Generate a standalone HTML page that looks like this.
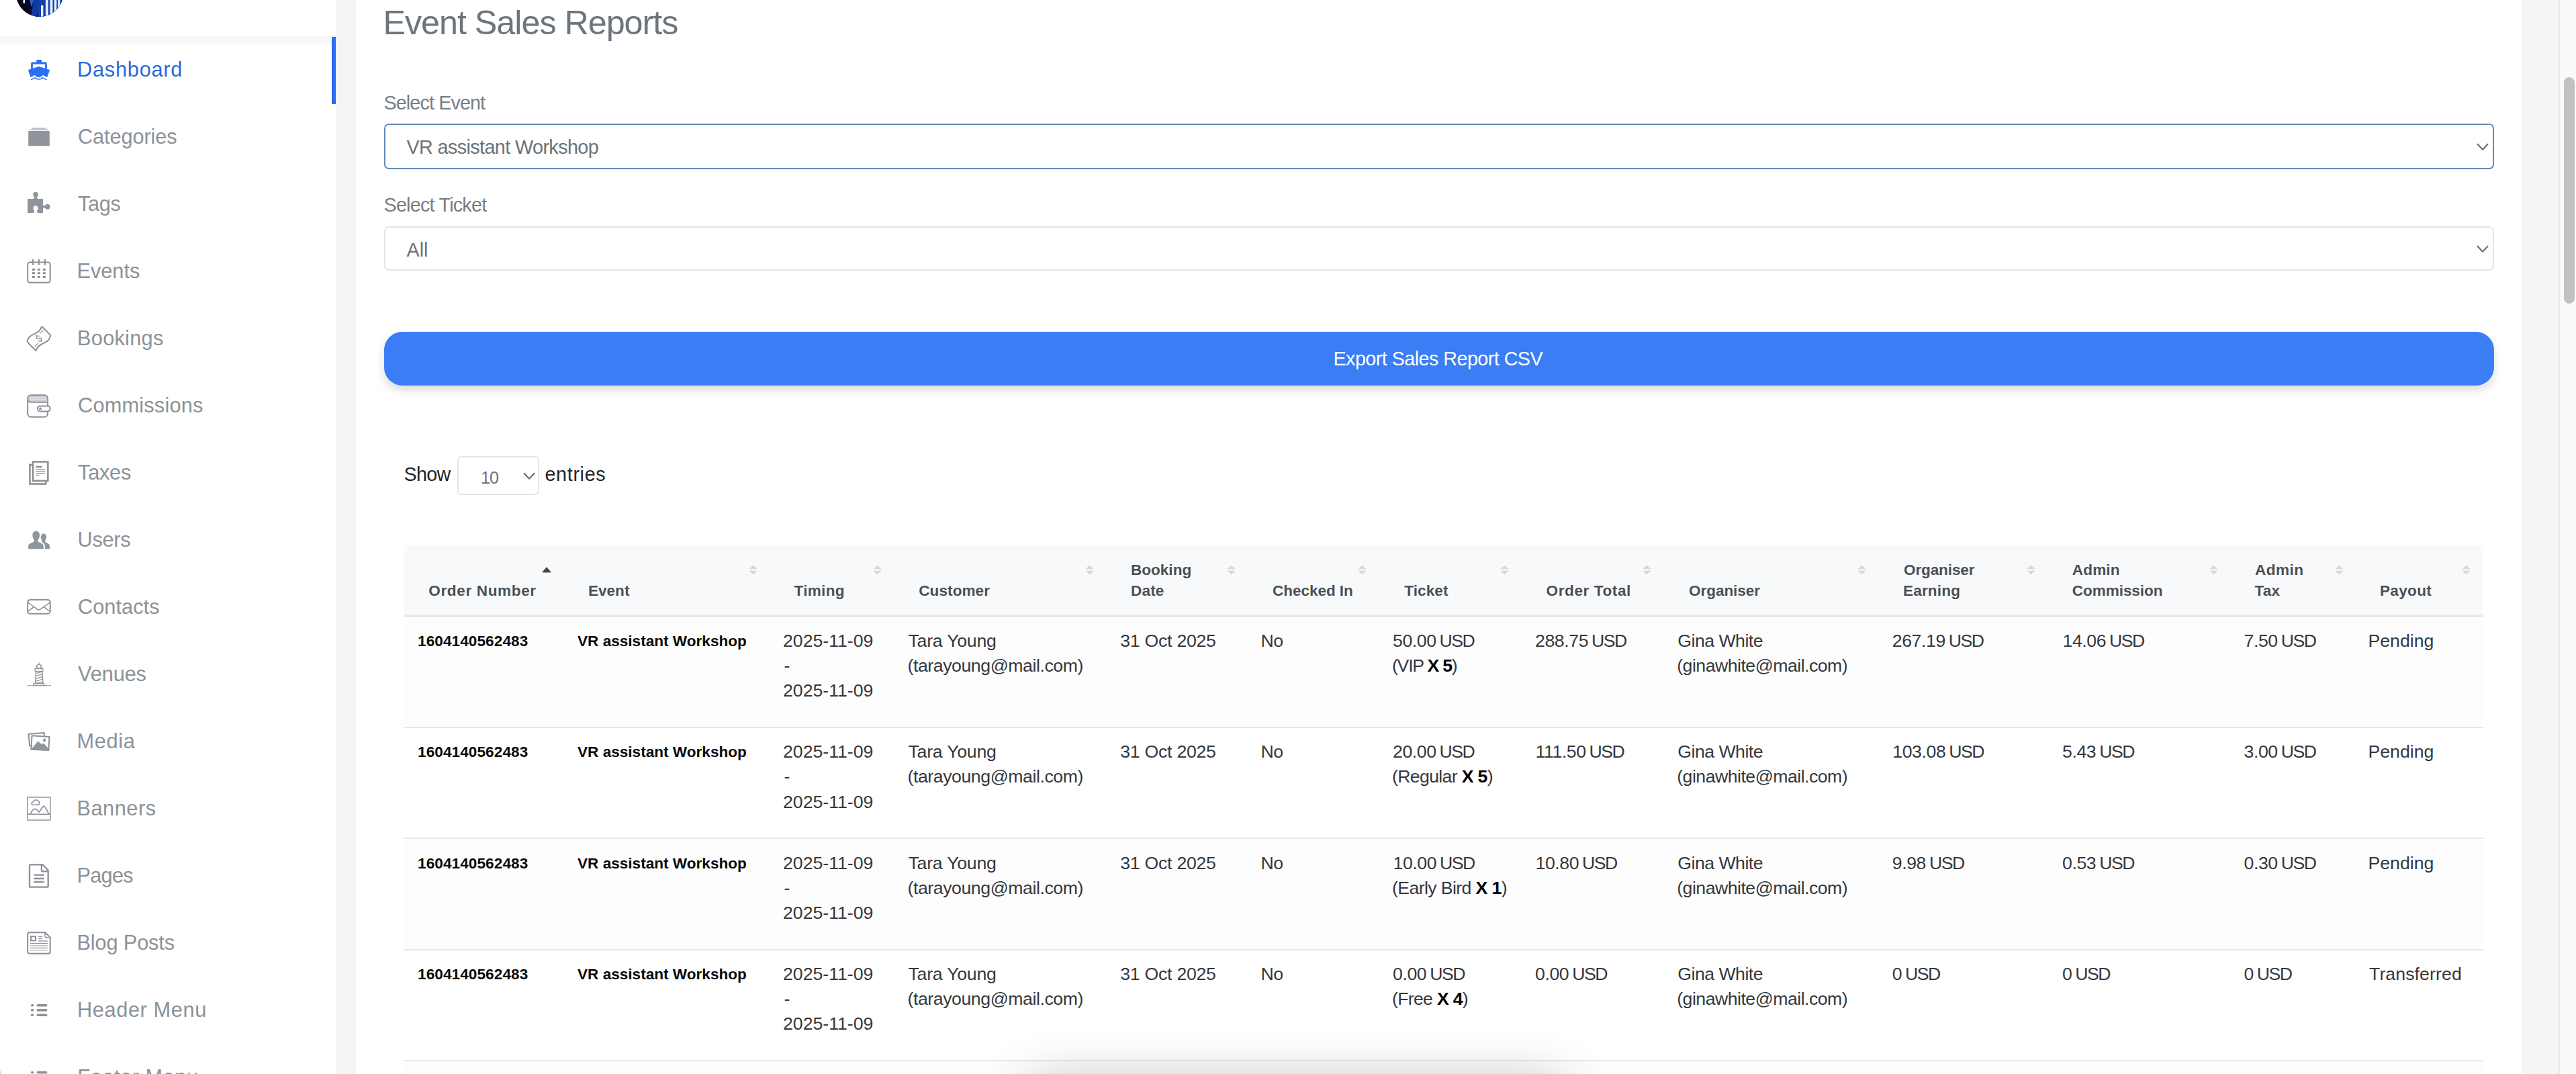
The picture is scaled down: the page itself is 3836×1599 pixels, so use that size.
<!DOCTYPE html>
<html lang="en"><head><meta charset="utf-8"><title>Event Sales Reports</title>
<style>
*{box-sizing:border-box;margin:0;padding:0}
html,body{width:3836px;height:1599px;overflow:hidden;background:#f5f5f5}
body{font-family:"Liberation Sans",Arial,sans-serif;position:relative;color:#212529}
.abs{position:absolute}
.t{position:absolute;white-space:nowrap;display:block}
#side{position:absolute;left:0;top:0;width:500px;height:1599px;background:#fff;overflow:hidden}
#shead{position:absolute;left:0;top:0;width:500px;height:54px;background:#fff;z-index:3}
#shsh{position:absolute;left:0;top:54px;width:494px;height:14px;background:linear-gradient(#f6f6f6,#f9f9f9 65%,#fff);z-index:2}
#avatar{position:absolute;left:24px;top:-45px;width:70px;height:70px;border-radius:50%;overflow:hidden;background:#070a22;z-index:4}
.nav{position:absolute;left:0;width:500px;height:100px}
.nav .ic{position:absolute;left:30px;top:20px}
.nav.act:after{content:"";position:absolute;right:0;top:0;width:6.5px;height:100px;background:#2c6bf3}
#card{position:absolute;left:530px;top:-40px;width:3225.3px;height:1700px;background:#fff}
.sel{position:absolute;left:572px;width:3142px;border-radius:7px;background:#fff}
.chev{position:absolute}
#btn{position:absolute;left:572px;top:494px;width:3142px;height:80px;border-radius:27px;background:#3b7df5;box-shadow:0 7px 14px rgba(20,20,40,.15)}
#thead{position:absolute;left:601.25px;top:812px;width:3096.5px;height:103px;background:#f8f9fa}
#thb{position:absolute;left:601.25px;top:915px;width:3096.5px;height:3.75px;background:#e7e9ec}
.row{position:absolute;left:601.25px;width:3096.5px}
.row.odd{background:#fdfdfd}
.sep{position:absolute;left:601.25px;width:3096.5px;height:2px;background:#e6e7e8}

#root{position:absolute;left:0;top:0;width:3836px;height:1599px;overflow:hidden;background:#f5f5f5}
</style></head><body><div id="root">

<div id="side">
<div id="shead"></div><div id="shsh"></div>
<div id="avatar"><svg width="70" height="70" viewBox="0 0 70 70">
<rect width="70" height="70" fill="#05081f"/>
<path d="M22 70 L26 45 L33 45 L37 70 Z" fill="#123a9e"/>
<path d="M30 70 L37 48 L37 70 Z" fill="#0a1c66"/>
<rect x="33" y="45" width="40" height="25" fill="#1440ad"/>
<path d="M20 45 L26 45 L23 56 Z" fill="#2a5fd8"/>
<rect x="10.5" y="45" width="2.5" height="5" fill="#e6f2ff"/>
<rect x="37" y="53" width="3.4" height="17" fill="#e3f1ff"/>
<rect x="43.9" y="45" width="3.9" height="25" fill="#e3f1ff"/>
<rect x="50.5" y="45" width="3.9" height="25" fill="#e3f1ff"/>
<rect x="56.7" y="45" width="3.6" height="25" fill="#e3f1ff"/>
<rect x="62.2" y="45" width="3.1" height="25" fill="#e3f1ff"/>
</svg></div><div class="abs" style="left:141px;top:-1px;width:6px;height:1.3px;border-radius:1px;background:#b5b8bb;z-index:4"></div>
<div class="nav act" style="top:55px"><svg class="ic" viewBox="30 20 60 60" width="60" height="60" >
<g fill="#2d6ef5">
<rect x="54.2" y="34" width="7.8" height="4.6" rx="1"/>
<path fill-rule="evenodd" d="M48.3 37.5 H67.7 A2.2 2.2 0 0 1 69.9 39.7 V48.5 H67.1 V40.6 H48.9 V48.5 H46.1 V39.7 A2.2 2.2 0 0 1 48.3 37.5 Z"/>
<path d="M57.8 43.9 L73.2 48.7 Q74.1 49 73.8 50 L70.4 59.6 Q67.6 59.9 65.6 57.6 Q64.4 56.4 63.4 57.6 Q61 60.2 57.8 60.2 Q54.6 60.2 52.2 57.6 Q51.2 56.4 50 57.6 Q48 59.9 45.2 59.6 L42.2 50 Q41.9 49 42.8 48.7 Z"/>
</g>
<path d="M46.6 63.6 Q49.6 62.8 51.9 60.6 Q54.6 63 57.8 63 Q61 63 63.7 60.6 Q66 62.8 69 63.6" fill="none" stroke="#2d6ef5" stroke-width="1.45" stroke-linecap="round" stroke-linejoin="round"/>
</svg></div>
<span id="t0" class="t" style="left:115.00px;top:83.00px;font-size:30.75px;line-height:41px;color:#2b68d9;letter-spacing:0.750px;">Dashboard</span>
<div class="nav" style="top:155px"><svg class="ic" viewBox="30 20 60 60" width="60" height="60" >
<rect x="42.2" y="40" width="31.6" height="22.3" fill="#8e959d"/>
<rect x="45" y="37.7" width="26" height="1.3" fill="#8e959d"/>
<rect x="47.5" y="35.2" width="21" height="1.7" fill="#b9bdc2"/>
</svg></div>
<span id="t1" class="t" style="left:116.00px;top:183.00px;font-size:30.75px;line-height:41px;color:#8b9298;letter-spacing:-0.111px;">Categories</span>
<div class="nav" style="top:255px"><svg class="ic" viewBox="30 20 60 60" width="60" height="60" >
<path fill="#8e959d" d="M41.1 41.1 H49.8 Q51.5 40.6 51.2 38.2 A4 4 0 1 1 55 38.2 Q54.7 40.6 56.4 41.1 H64 V49.8 Q64.5 51.5 67.2 50.9 A4 4 0 1 1 67.2 54.7 Q64.5 54.1 64 55.8 V62.1 H56.2 Q54.8 60.6 55.2 58.2 A3.75 3.75 0 1 0 51 58.2 Q51.4 60.6 50 62.1 H41.1 Z"/>
</svg></div>
<span id="t2" class="t" style="left:116.00px;top:283.00px;font-size:30.75px;line-height:41px;color:#8b9298;letter-spacing:-0.333px;">Tags</span>
<div class="nav" style="top:355px"><svg class="ic" viewBox="30 20 60 60" width="60" height="60" ><rect x="41.2" y="35.4" width="33.5" height="30.4" rx="3.5" fill="none" stroke="#8b9096" stroke-width="2"/><line x1="48.9" y1="31.1" x2="48.9" y2="39.7" stroke="#8b9096" stroke-width="2"/><line x1="58" y1="31.1" x2="58" y2="39.7" stroke="#8b9096" stroke-width="2"/><line x1="67" y1="31.1" x2="67" y2="39.7" stroke="#8b9096" stroke-width="2"/><rect x="48" y="44.8" width="4" height="3" fill="#8b9096"/><rect x="48" y="50.2" width="4" height="3" fill="#8b9096"/><rect x="48" y="55.9" width="4" height="3" fill="#8b9096"/><rect x="55.9" y="44.8" width="4" height="3" fill="#8b9096"/><rect x="55.9" y="50.2" width="4" height="3" fill="#8b9096"/><rect x="55.9" y="55.9" width="4" height="3" fill="#8b9096"/><rect x="63.8" y="44.8" width="4" height="3" fill="#8b9096"/><rect x="63.8" y="50.2" width="4" height="3" fill="#8b9096"/><rect x="63.8" y="55.9" width="4" height="3" fill="#8b9096"/></svg></div>
<span id="t3" class="t" style="left:114.50px;top:383.00px;font-size:30.75px;line-height:41px;color:#8b9298;letter-spacing:-0.040px;">Events</span>
<div class="nav" style="top:455px"><svg class="ic" viewBox="30 20 60 60" width="60" height="60" >
<g fill="none" stroke="#8b9096" stroke-width="2" stroke-linejoin="round" stroke-linecap="round">
<path d="M40.6 53.2 C41.5 47 46 44.5 51.1 42.2 C56 40 60.5 37.5 61.6 32 Q62.3 30.9 63.2 31.8 L74.8 43.6 Q75.6 44.6 75.1 45.6 C73.5 52 69 54 65.1 55.8 C60 58.2 55.5 60.5 54.3 65.8 Q53.6 67.2 52.5 66.2 L41 54.3 Q40.4 53.8 40.6 53.2 Z"/>
</g>
<g fill="none" stroke="#8b9096" stroke-width="1.2" stroke-linecap="round">
<path d="M59.5 41.1 L64 37.2 M52.3 60.7 L56.7 56.2"/>
<g transform="translate(57.9 48.9) rotate(-41)" stroke-width="1.5"><path d="M2.5 -2.5 C2.1 -3.8 0.9 -4.3 -0.2 -4.3 C-1.7 -4.3 -2.7 -3.4 -2.6 -2.2 C-2.5 -0.9 -1.3 -0.5 0 0 C1.5 0.5 2.7 1 2.7 2.3 C2.7 3.6 1.6 4.3 0.2 4.3 C-1.2 4.3 -2.3 3.8 -2.8 2.6 M0 -5.7 V-4.3 M0 4.3 V5.7"/></g>
</g>
</svg></div>
<span id="t4" class="t" style="left:115.00px;top:483.00px;font-size:30.75px;line-height:41px;color:#8b9298;letter-spacing:0.257px;">Bookings</span>
<div class="nav" style="top:555px"><svg class="ic" viewBox="30 20 60 60" width="60" height="60" >
<rect x="42.4" y="34.6" width="27.4" height="9" rx="3" fill="#c3c6cb"/>
<path d="M44 37.3 H68.5 M44 40.4 H68.5" stroke="#fff" stroke-width="1.2"/>
<rect x="41.2" y="33.2" width="29.9" height="32.6" rx="5" fill="none" stroke="#8b9096" stroke-width="2"/>
<path d="M41.5 40 Q42 43.9 46 43.9 H71" fill="none" stroke="#8b9096" stroke-width="1.8"/>
<rect x="56" y="49.4" width="18.7" height="8" rx="4" ry="4" fill="#fff" stroke="#8b9096" stroke-width="2"/>
<circle cx="60" cy="53.4" r="1.9" fill="#8b9096"/>
</svg></div>
<span id="t5" class="t" style="left:116.00px;top:583.00px;font-size:30.75px;line-height:41px;color:#8b9298;letter-spacing:0.180px;">Commissions</span>
<div class="nav" style="top:655px"><svg class="ic" viewBox="30 20 60 60" width="60" height="60" >
<path d="M44.45 35.8 V65.45 H68.2 V61" fill="none" stroke="#8b9096" stroke-width="2.5"/>
<path d="M43.2 37 H48" stroke="#8b9096" stroke-width="2.5"/>
<rect x="49.05" y="32.55" width="22.3" height="28.3" fill="#fff" stroke="#8b9096" stroke-width="2.5"/>
<path d="M53.4 40 H62.6" stroke="#8b9096" stroke-width="2.6"/>
<path d="M53.4 43.8 H67 M53.4 46.8 H67 M53.4 49.8 H67 M53.4 52.7 H57.8" stroke="#8b9096" stroke-width="1.3"/>
</svg></div>
<span id="t6" class="t" style="left:116.00px;top:683.00px;font-size:30.75px;line-height:41px;color:#8b9298;letter-spacing:-0.250px;">Taxes</span>
<div class="nav" style="top:755px"><svg class="ic" viewBox="30 20 60 60" width="60" height="60" >
<g fill="#8e959d">
<path d="M65 39.4 C67.6 39.4 69.1 41.4 69 44.3 C68.9 47 68 48.6 67.3 49.8 C67 51.6 67.6 52.4 69.2 53.1 C72.5 54.3 74 55.6 74 58 V62.3 H67 V58.5 C67 55.8 65.6 54.6 63.2 53.4 L61.2 52.5 C62.4 51.6 62.6 50.8 62.4 49.8 C61.6 48.6 61 46.6 61 44.3 C61 41.4 62.4 39.4 65 39.4 Z"/>
<path d="M53.8 35.8 C57.2 35.8 59.2 38.2 59.1 41.8 C59 45 57.8 47.4 56.6 48.8 C56.2 50.6 56.8 51.6 58.6 52.4 C62.6 54 64.8 55.2 64.8 58.4 V62.3 H42.2 V58.4 C42.2 55.2 44.6 54 48.8 52.4 C50.6 51.6 51.2 50.6 50.8 48.8 C49.6 47.4 48.5 45 48.4 41.8 C48.3 38.2 50.4 35.8 53.8 35.8 Z" stroke="#fff" stroke-width="0" />
</g>
<path d="M59.6 51.4 C63.6 53 66 54.6 66 58.4 V63" fill="none" stroke="#fff" stroke-width="1.6"/>
</svg></div>
<span id="t7" class="t" style="left:115.50px;top:783.00px;font-size:30.75px;line-height:41px;color:#8b9298;letter-spacing:-0.300px;">Users</span>
<div class="nav" style="top:855px"><svg class="ic" viewBox="30 20 60 60" width="60" height="60" >
<rect x="41.2" y="37.9" width="33.5" height="20.9" rx="4" fill="none" stroke="#8b9096" stroke-width="2"/>
<path d="M41.6 42 L56.4 52.6 Q57.8 53.6 59.2 52.6 L74.2 42 M41.9 54.8 L50.6 48.7 M74 54.8 L65.1 48.7" fill="none" stroke="#8b9096" stroke-width="1.5"/>
</svg></div>
<span id="t8" class="t" style="left:116.00px;top:883.00px;font-size:30.75px;line-height:41px;color:#8b9298;letter-spacing:0.029px;">Contacts</span>
<div class="nav" style="top:955px"><svg class="ic" viewBox="30 20 60 60" width="60" height="60" ><g fill="none" stroke="#8b9096" stroke-width="1.15" stroke-linejoin="round"><path d="M53.4 44.5 L52.3 62.3 H64 L62.9 44.5"/><rect x="52.1" y="40.6" width="11.9" height="3.9"/><path d="M54.2 40.6 V38 Q54.2 34.2 58.1 34.2 Q61.8 34.2 61.8 38 V40.6 M56.2 40.6 V36 M60 40.6 V36 M58.1 34.2 V31.3"/><rect x="50.1" y="62.3" width="15.7" height="3.1"/><path d="M53.3 47.6 L62.9 44.9 M53 51.6 L63.2 48.6 M52.8 55.6 L63.4 52.4 M52.6 59.4 L63.7 56.2 M55 62.3 L63.9 59.8"/><path d="M40 65.7 q1.5 1.2 3 0 t3 0 t3 0 t3 0 t3 0 t3 0 t3 0 t3 0 t3 0 t3 0 t3 0 t3 0" stroke-width="1"/></g></svg></div>
<span id="t9" class="t" style="left:116.00px;top:983.00px;font-size:30.75px;line-height:41px;color:#8b9298;letter-spacing:-0.120px;">Venues</span>
<div class="nav" style="top:1055px"><svg class="ic" viewBox="30 20 60 60" width="60" height="60" >
<path d="M46.5 55.4 L44.2 55.6 L42.5 37.8 L65.7 36.1 L66 40.6" fill="none" stroke="#8b9096" stroke-width="2" stroke-linejoin="round"/>
<path d="M47.5 40.3 L73.5 41.9 L72.4 62.1 L46.4 60.7 Z" fill="#fff" stroke="#8b9096" stroke-width="2" stroke-linejoin="round"/>
<path d="M46.6 60.6 L56.4 48.4 L62.6 53.4 L64.5 51.2 L72.6 59.8 L72.4 62.1 Z" fill="#8e959d"/>
<circle cx="66.2" cy="47" r="2.3" fill="#8e959d"/>
</svg></div>
<span id="t10" class="t" style="left:114.50px;top:1083.00px;font-size:30.75px;line-height:41px;color:#8b9298;letter-spacing:0.650px;">Media</span>
<div class="nav" style="top:1155px"><svg class="ic" viewBox="30 20 60 60" width="60" height="60" >
<rect x="41" y="31.9" width="33.9" height="34.1" fill="none" stroke="#8b9096" stroke-width="1.45"/>
<path d="M41 57.3 H75" stroke="#8b9096" stroke-width="1.45"/>
<path d="M45.3 57 C47.5 51.5 50 49.3 52 49.4 C54.5 49.5 56.5 52 58.4 54.2 C61 50.5 63 45.3 65.1 45.3 C67.2 45.3 69.5 51 72.9 57" fill="none" stroke="#8b9096" stroke-width="1.7" stroke-linejoin="round"/>
<path d="M49.6 43.3 C46.4 43.3 46.4 39.2 49.4 38.9 C50 35.6 55 35 56.6 37.6 C59.4 38 59.6 43.3 56 43.3 Z" fill="none" stroke="#8b9096" stroke-width="1.5" stroke-linejoin="round"/>
</svg></div>
<span id="t11" class="t" style="left:114.50px;top:1183.00px;font-size:30.75px;line-height:41px;color:#8b9298;letter-spacing:0.500px;">Banners</span>
<div class="nav" style="top:1255px"><svg class="ic" viewBox="30 20 60 60" width="60" height="60" >
<path d="M45.5 32.3 H63.6 L71.7 40.6 V64.2 Q71.7 65.7 70.2 65.7 H45.5 Q44 65.7 44 64.2 V33.8 Q44 32.3 45.5 32.3 Z" fill="none" stroke="#8b9096" stroke-width="2.3" stroke-linejoin="round"/>
<path d="M61.9 32.6 V41.2 Q61.9 42.4 63.1 42.4 H71.6" fill="none" stroke="#8b9096" stroke-width="2.3"/>
<path d="M50.3 47.7 H65.7 M50.3 53 H65.7 M50.3 58 H65.7" stroke="#8b9096" stroke-width="2.3"/>
</svg></div>
<span id="t12" class="t" style="left:114.50px;top:1283.00px;font-size:30.75px;line-height:41px;color:#8b9298;letter-spacing:-0.750px;">Pages</span>
<div class="nav" style="top:1355px"><svg class="ic" viewBox="30 20 60 60" width="60" height="60" >
<path d="M44.2 33.2 H67.4 L74.7 40.6 V61.7 Q74.7 64.7 71.7 64.7 H44.2 Q41.2 64.7 41.2 61.7 V36.2 Q41.2 33.2 44.2 33.2 Z" fill="none" stroke="#8b9096" stroke-width="2" stroke-linejoin="round"/>
<path d="M66.8 33.6 L67 38.6 Q67.1 41 69.4 41 L74.4 41.1" fill="none" stroke="#8b9096" stroke-width="1.4"/>
<rect x="46" y="39.3" width="7" height="6.1" fill="none" stroke="#8b9096" stroke-width="2"/>
<path d="M57.3 39.4 H63 M57.3 42.6 H63" stroke="#8b9096" stroke-width="1.3"/>
<path d="M57.3 46 H71" stroke="#a9adb2" stroke-width="1.7"/>
<path d="M45 49.5 H71 M45 53 H71 M45 56.4 H71 M45 59.5 H71" stroke="#8b9096" stroke-width="1.2"/>
</svg></div>
<span id="t13" class="t" style="left:114.50px;top:1383.00px;font-size:30.75px;line-height:41px;color:#8b9298;letter-spacing:-0.156px;">Blog Posts</span>
<div class="nav" style="top:1455px"><svg class="ic" viewBox="30 20 60 60" width="60" height="60" ><ellipse cx="48.1" cy="41.7" rx="2.4" ry="1.8" fill="#8b9096"/><rect x="54.5" y="39.900000000000006" width="15.9" height="3.6" rx="1.8" fill="#8b9096"/><ellipse cx="48.1" cy="48.9" rx="2.4" ry="1.8" fill="#8b9096"/><rect x="54.5" y="47.1" width="15.9" height="3.6" rx="1.8" fill="#8b9096"/><ellipse cx="48.1" cy="56.2" rx="2.4" ry="1.8" fill="#8b9096"/><rect x="54.5" y="54.400000000000006" width="15.9" height="3.6" rx="1.8" fill="#8b9096"/></svg></div>
<span id="t14" class="t" style="left:115.00px;top:1483.00px;font-size:30.75px;line-height:41px;color:#8b9298;letter-spacing:0.600px;">Header Menu</span>
<div class="nav" style="top:1555px"><svg class="ic" viewBox="30 20 60 60" width="60" height="60" ><ellipse cx="48.1" cy="41.7" rx="2.4" ry="1.8" fill="#8b9096"/><rect x="54.5" y="39.900000000000006" width="15.9" height="3.6" rx="1.8" fill="#8b9096"/><ellipse cx="48.1" cy="48.9" rx="2.4" ry="1.8" fill="#8b9096"/><rect x="54.5" y="47.1" width="15.9" height="3.6" rx="1.8" fill="#8b9096"/><ellipse cx="48.1" cy="56.2" rx="2.4" ry="1.8" fill="#8b9096"/><rect x="54.5" y="54.400000000000006" width="15.9" height="3.6" rx="1.8" fill="#8b9096"/></svg></div>
<span id="t15" class="t" style="left:115.50px;top:1583.00px;font-size:30.75px;line-height:41px;color:#8b9298;letter-spacing:0.500px;">Footer Menu</span>
</div>
<div id="card"></div>
<span id="t16" class="t" style="left:570.50px;top:1.00px;font-size:50.22px;line-height:66px;color:#6c757d;letter-spacing:-1.000px;">Event Sales Reports</span>
<span id="t17" class="t" style="left:571.50px;top:134.00px;font-size:28.70px;line-height:38px;color:#777e85;letter-spacing:-0.864px;">Select Event</span>
<div class="sel" style="top:184px;height:67.5px;border:2.5px solid #648cb9"></div>
<span id="t18" class="t" style="left:605.50px;top:200.00px;font-size:28.70px;line-height:38px;color:#6b7278;letter-spacing:-0.575px;">VR assistant Workshop</span>
<span id="t19" class="t" style="left:571.50px;top:286.00px;font-size:28.70px;line-height:38px;color:#777e85;letter-spacing:-0.750px;">Select Ticket</span>
<div class="sel" style="top:337px;height:66px;border:2px solid #e4e5e7"></div>
<span id="t20" class="t" style="left:605.50px;top:353.00px;font-size:28.70px;line-height:38px;color:#6b7278;letter-spacing:0.000px;">All</span>
<svg class="chev" style="left:3687.7px;top:212.8px" width="18" height="11" viewBox="0 0 18 11"><path d="M1 1.2 L9 9.6 L17 1.2" fill="none" stroke="#666" stroke-width="2.1"/></svg>
<svg class="chev" style="left:3687.7px;top:364.8px" width="18" height="11" viewBox="0 0 18 11"><path d="M1 1.2 L9 9.6 L17 1.2" fill="none" stroke="#666" stroke-width="2.1"/></svg>
<div id="btn"></div>
<span id="t21" class="t" style="left:1985.50px;top:515.00px;font-size:28.70px;line-height:38px;color:#fff;letter-spacing:-0.527px;">Export Sales Report CSV</span>
<span id="t22" class="t" style="left:601.50px;top:687.00px;font-size:28.70px;line-height:38px;color:#212529;letter-spacing:-0.667px;">Show</span>
<div class="abs" style="left:681px;top:679px;width:122px;height:58px;border:2px solid #e4e5e7;border-radius:6px;background:#fff"></div>
<span id="t23" class="t" style="left:716.00px;top:694.00px;font-size:25.11px;line-height:34px;color:#6b7278;letter-spacing:-1.000px;">10</span>
<svg class="chev" style="left:778.5px;top:703.3px" width="18" height="11" viewBox="0 0 18 11"><path d="M1 1.2 L9 9.6 L17 1.2" fill="none" stroke="#666" stroke-width="2.1"/></svg>
<span id="t24" class="t" style="left:811.50px;top:687.00px;font-size:28.70px;line-height:38px;color:#212529;letter-spacing:0.667px;">entries</span>
<div id="thead"></div><div id="thb"></div>
<span id="t25" class="t" style="left:638.25px;top:865.00px;font-size:22.55px;line-height:29px;color:#495057;font-weight:bold;letter-spacing:0.636px;">Order Number</span>
<svg class="abs" style="left:806.9px;top:843.6px" width="14" height="9" viewBox="0 0 14 9"><path d="M7 0.6 L13.3 8 H0.7 Z" fill="#444" stroke="#444" stroke-width="0.8" stroke-linejoin="round"/></svg>
<span id="t26" class="t" style="left:876.00px;top:865.00px;font-size:22.55px;line-height:29px;color:#495057;font-weight:bold;letter-spacing:0.000px;">Event</span>
<svg class="abs" style="left:1114.7px;top:840.6px" width="13" height="15" viewBox="0 0 13 15"><path d="M6.5 0.4 L12.6 6.2 H0.4 Z M0.4 8.8 H12.6 L6.5 14.6 Z" fill="#d6d8da"/></svg>
<span id="t27" class="t" style="left:1182.50px;top:865.00px;font-size:22.55px;line-height:29px;color:#495057;font-weight:bold;letter-spacing:0.300px;">Timing</span>
<svg class="abs" style="left:1300.2px;top:840.6px" width="13" height="15" viewBox="0 0 13 15"><path d="M6.5 0.4 L12.6 6.2 H0.4 Z M0.4 8.8 H12.6 L6.5 14.6 Z" fill="#d6d8da"/></svg>
<span id="t28" class="t" style="left:1368.25px;top:865.00px;font-size:22.55px;line-height:29px;color:#495057;font-weight:bold;letter-spacing:0.071px;">Customer</span>
<svg class="abs" style="left:1616.45px;top:840.6px" width="13" height="15" viewBox="0 0 13 15"><path d="M6.5 0.4 L12.6 6.2 H0.4 Z M0.4 8.8 H12.6 L6.5 14.6 Z" fill="#d6d8da"/></svg>
<span id="t29" class="t" style="left:1684.00px;top:834.00px;font-size:22.55px;line-height:29px;color:#495057;font-weight:bold;letter-spacing:0.000px;">Booking</span>
<span id="t30" class="t" style="left:1684.00px;top:865.00px;font-size:22.55px;line-height:29px;color:#495057;font-weight:bold;letter-spacing:0.171px;">Date</span>
<svg class="abs" style="left:1826.7px;top:840.6px" width="13" height="15" viewBox="0 0 13 15"><path d="M6.5 0.4 L12.6 6.2 H0.4 Z M0.4 8.8 H12.6 L6.5 14.6 Z" fill="#d6d8da"/></svg>
<span id="t31" class="t" style="left:1895.00px;top:865.00px;font-size:22.55px;line-height:29px;color:#495057;font-weight:bold;letter-spacing:-0.056px;">Checked In</span>
<svg class="abs" style="left:2022.45px;top:840.6px" width="13" height="15" viewBox="0 0 13 15"><path d="M6.5 0.4 L12.6 6.2 H0.4 Z M0.4 8.8 H12.6 L6.5 14.6 Z" fill="#d6d8da"/></svg>
<span id="t32" class="t" style="left:2091.25px;top:865.00px;font-size:22.55px;line-height:29px;color:#495057;font-weight:bold;letter-spacing:0.100px;">Ticket</span>
<svg class="abs" style="left:2234.45px;top:840.6px" width="13" height="15" viewBox="0 0 13 15"><path d="M6.5 0.4 L12.6 6.2 H0.4 Z M0.4 8.8 H12.6 L6.5 14.6 Z" fill="#d6d8da"/></svg>
<span id="t33" class="t" style="left:2302.50px;top:865.00px;font-size:22.55px;line-height:29px;color:#495057;font-weight:bold;letter-spacing:0.600px;">Order Total</span>
<svg class="abs" style="left:2446.2px;top:840.6px" width="13" height="15" viewBox="0 0 13 15"><path d="M6.5 0.4 L12.6 6.2 H0.4 Z M0.4 8.8 H12.6 L6.5 14.6 Z" fill="#d6d8da"/></svg>
<span id="t34" class="t" style="left:2515.00px;top:865.00px;font-size:22.55px;line-height:29px;color:#495057;font-weight:bold;letter-spacing:-0.062px;">Organiser</span>
<svg class="abs" style="left:2766.2px;top:840.6px" width="13" height="15" viewBox="0 0 13 15"><path d="M6.5 0.4 L12.6 6.2 H0.4 Z M0.4 8.8 H12.6 L6.5 14.6 Z" fill="#d6d8da"/></svg>
<span id="t35" class="t" style="left:2835.00px;top:834.00px;font-size:22.55px;line-height:29px;color:#495057;font-weight:bold;letter-spacing:-0.125px;">Organiser</span>
<span id="t36" class="t" style="left:2834.00px;top:865.00px;font-size:22.55px;line-height:29px;color:#495057;font-weight:bold;letter-spacing:0.171px;">Earning</span>
<svg class="abs" style="left:3018.2px;top:840.6px" width="13" height="15" viewBox="0 0 13 15"><path d="M6.5 0.4 L12.6 6.2 H0.4 Z M0.4 8.8 H12.6 L6.5 14.6 Z" fill="#d6d8da"/></svg>
<span id="t37" class="t" style="left:3085.75px;top:834.00px;font-size:22.55px;line-height:29px;color:#495057;font-weight:bold;letter-spacing:0.171px;">Admin</span>
<span id="t38" class="t" style="left:3085.75px;top:865.00px;font-size:22.55px;line-height:29px;color:#495057;font-weight:bold;letter-spacing:-0.056px;">Commission</span>
<svg class="abs" style="left:3290.2px;top:840.6px" width="13" height="15" viewBox="0 0 13 15"><path d="M6.5 0.4 L12.6 6.2 H0.4 Z M0.4 8.8 H12.6 L6.5 14.6 Z" fill="#d6d8da"/></svg>
<span id="t39" class="t" style="left:3358.00px;top:834.00px;font-size:22.55px;line-height:29px;color:#495057;font-weight:bold;letter-spacing:0.500px;">Admin</span>
<span id="t40" class="t" style="left:3357.50px;top:865.00px;font-size:22.55px;line-height:29px;color:#495057;font-weight:bold;letter-spacing:0.171px;">Tax</span>
<svg class="abs" style="left:3476.7px;top:840.6px" width="13" height="15" viewBox="0 0 13 15"><path d="M6.5 0.4 L12.6 6.2 H0.4 Z M0.4 8.8 H12.6 L6.5 14.6 Z" fill="#d6d8da"/></svg>
<span id="t41" class="t" style="left:3544.00px;top:865.00px;font-size:22.55px;line-height:29px;color:#495057;font-weight:bold;letter-spacing:0.320px;">Payout</span>
<svg class="abs" style="left:3666.45px;top:840.6px" width="13" height="15" viewBox="0 0 13 15"><path d="M6.5 0.4 L12.6 6.2 H0.4 Z M0.4 8.8 H12.6 L6.5 14.6 Z" fill="#d6d8da"/></svg>
<div class="sep" style="top:1082px"></div>
<div class="sep" style="top:1247.4px"></div>
<div class="sep" style="top:1412.9px"></div>
<div class="sep" style="top:1578.3px"></div>
<div class="row odd" style="top:918.75px;height:161.25px"></div>
<span id="t42" class="t" style="left:622.00px;top:940.00px;font-size:22.55px;line-height:29px;color:#0a0a0a;font-weight:bold;letter-spacing:0.100px;">1604140562483</span>
<span id="t43" class="t" style="left:860.00px;top:940.00px;font-size:22.55px;line-height:29px;color:#0a0a0a;font-weight:bold;letter-spacing:0.020px;">VR assistant Workshop</span>
<span id="t44" class="t" style="left:1166.00px;top:936.00px;font-size:26.65px;line-height:36px;color:#34383c;letter-spacing:0.000px;">2025-11-09</span>
<span id="t45" class="t" style="left:1167.50px;top:973.00px;font-size:26.65px;line-height:36px;color:#34383c;letter-spacing:-0.198px;">-</span>
<span class="t" style="left:1166.00px;top:1010.00px;font-size:26.65px;line-height:36px;color:#34383c;letter-spacing:0.000px;">2025-11-09</span>
<span id="t46" class="t" style="left:1352.50px;top:936.00px;font-size:26.65px;line-height:36px;color:#34383c;letter-spacing:-0.222px;">Tara Young</span>
<span id="t47" class="t" style="left:1351.50px;top:973.00px;font-size:26.65px;line-height:36px;color:#34383c;letter-spacing:-0.421px;">(tarayoung@mail.com)</span>
<span id="t48" class="t" style="left:1668.25px;top:936.00px;font-size:26.65px;line-height:36px;color:#34383c;letter-spacing:-0.250px;">31 Oct 2025</span>
<span id="t49" class="t" style="left:1877.50px;top:936.00px;font-size:26.65px;line-height:36px;color:#34383c;letter-spacing:-0.500px;">No</span>
<span id="t50" class="t" style="left:2074.00px;top:936.00px;font-size:26.65px;line-height:36px;color:#34383c;letter-spacing:-0.400px;">50.00<span style="letter-spacing:-1.5px;word-spacing:-1.0px"> USD</span></span>
<span id="t51" class="t" style="left:2073.00px;top:973.00px;font-size:26.65px;line-height:36px;color:#34383c;letter-spacing:-1.250px;">(VIP <b style="color:#000">X 5</b>)</span>
<span id="t52" class="t" style="left:2286.00px;top:936.00px;font-size:26.65px;line-height:36px;color:#34383c;letter-spacing:-0.400px;">288.75<span style="letter-spacing:-1.5px;word-spacing:-1.0px"> USD</span></span>
<span id="t53" class="t" style="left:2498.25px;top:936.00px;font-size:26.65px;line-height:36px;color:#34383c;letter-spacing:-0.500px;">Gina White</span>
<span id="t54" class="t" style="left:2497.25px;top:973.00px;font-size:26.65px;line-height:36px;color:#34383c;letter-spacing:-0.500px;">(ginawhite@mail.com)</span>
<span id="t55" class="t" style="left:2817.75px;top:936.00px;font-size:26.65px;line-height:36px;color:#34383c;letter-spacing:-0.400px;">267.19<span style="letter-spacing:-1.5px;word-spacing:-1.0px"> USD</span></span>
<span id="t56" class="t" style="left:3071.50px;top:936.00px;font-size:26.65px;line-height:36px;color:#34383c;letter-spacing:-0.400px;">14.06<span style="letter-spacing:-1.5px;word-spacing:-1.0px"> USD</span></span>
<span id="t57" class="t" style="left:3341.50px;top:936.00px;font-size:26.65px;line-height:36px;color:#34383c;letter-spacing:-0.400px;">7.50<span style="letter-spacing:-1.5px;word-spacing:-1.0px"> USD</span></span>
<span id="t58" class="t" style="left:3526.50px;top:936.00px;font-size:26.65px;line-height:36px;color:#34383c;letter-spacing:0.000px;">Pending</span>
<div class="row" style="top:1084px;height:161.4000000000001px"></div>
<span class="t" style="left:622.00px;top:1105.00px;font-size:22.55px;line-height:29px;color:#0a0a0a;font-weight:bold;letter-spacing:0.100px;">1604140562483</span>
<span class="t" style="left:860.00px;top:1105.00px;font-size:22.55px;line-height:29px;color:#0a0a0a;font-weight:bold;letter-spacing:0.020px;">VR assistant Workshop</span>
<span class="t" style="left:1166.00px;top:1101.00px;font-size:26.65px;line-height:36px;color:#34383c;letter-spacing:0.000px;">2025-11-09</span>
<span class="t" style="left:1167.50px;top:1138.00px;font-size:26.65px;line-height:36px;color:#34383c;letter-spacing:-0.198px;">-</span>
<span class="t" style="left:1166.00px;top:1176.00px;font-size:26.65px;line-height:36px;color:#34383c;letter-spacing:0.000px;">2025-11-09</span>
<span class="t" style="left:1352.50px;top:1101.00px;font-size:26.65px;line-height:36px;color:#34383c;letter-spacing:-0.222px;">Tara Young</span>
<span class="t" style="left:1351.50px;top:1138.00px;font-size:26.65px;line-height:36px;color:#34383c;letter-spacing:-0.421px;">(tarayoung@mail.com)</span>
<span class="t" style="left:1668.25px;top:1101.00px;font-size:26.65px;line-height:36px;color:#34383c;letter-spacing:-0.250px;">31 Oct 2025</span>
<span class="t" style="left:1877.50px;top:1101.00px;font-size:26.65px;line-height:36px;color:#34383c;letter-spacing:-0.500px;">No</span>
<span id="t59" class="t" style="left:2074.00px;top:1101.00px;font-size:26.65px;line-height:36px;color:#34383c;letter-spacing:-0.400px;">20.00<span style="letter-spacing:-1.5px;word-spacing:-1.0px"> USD</span></span>
<span id="t60" class="t" style="left:2073.00px;top:1138.00px;font-size:26.65px;line-height:36px;color:#34383c;letter-spacing:-0.650px;">(Regular <b style="color:#000">X 5</b>)</span>
<span id="t61" class="t" style="left:2286.50px;top:1101.00px;font-size:26.65px;line-height:36px;color:#34383c;letter-spacing:-0.400px;">111.50<span style="letter-spacing:-1.5px;word-spacing:-1.0px"> USD</span></span>
<span class="t" style="left:2498.25px;top:1101.00px;font-size:26.65px;line-height:36px;color:#34383c;letter-spacing:-0.500px;">Gina White</span>
<span class="t" style="left:2497.25px;top:1138.00px;font-size:26.65px;line-height:36px;color:#34383c;letter-spacing:-0.500px;">(ginawhite@mail.com)</span>
<span id="t62" class="t" style="left:2818.25px;top:1101.00px;font-size:26.65px;line-height:36px;color:#34383c;letter-spacing:-0.400px;">103.08<span style="letter-spacing:-1.5px;word-spacing:-1.0px"> USD</span></span>
<span id="t63" class="t" style="left:3071.00px;top:1101.00px;font-size:26.65px;line-height:36px;color:#34383c;letter-spacing:-0.400px;">5.43<span style="letter-spacing:-1.5px;word-spacing:-1.0px"> USD</span></span>
<span id="t64" class="t" style="left:3341.50px;top:1101.00px;font-size:26.65px;line-height:36px;color:#34383c;letter-spacing:-0.400px;">3.00<span style="letter-spacing:-1.5px;word-spacing:-1.0px"> USD</span></span>
<span class="t" style="left:3526.50px;top:1101.00px;font-size:26.65px;line-height:36px;color:#34383c;letter-spacing:0.000px;">Pending</span>
<div class="row odd" style="top:1249.4px;height:161.5px"></div>
<span class="t" style="left:622.00px;top:1271.00px;font-size:22.55px;line-height:29px;color:#0a0a0a;font-weight:bold;letter-spacing:0.100px;">1604140562483</span>
<span class="t" style="left:860.00px;top:1271.00px;font-size:22.55px;line-height:29px;color:#0a0a0a;font-weight:bold;letter-spacing:0.020px;">VR assistant Workshop</span>
<span class="t" style="left:1166.00px;top:1267.00px;font-size:26.65px;line-height:36px;color:#34383c;letter-spacing:0.000px;">2025-11-09</span>
<span class="t" style="left:1167.50px;top:1304.00px;font-size:26.65px;line-height:36px;color:#34383c;letter-spacing:-0.198px;">-</span>
<span class="t" style="left:1166.00px;top:1341.00px;font-size:26.65px;line-height:36px;color:#34383c;letter-spacing:0.000px;">2025-11-09</span>
<span class="t" style="left:1352.50px;top:1267.00px;font-size:26.65px;line-height:36px;color:#34383c;letter-spacing:-0.222px;">Tara Young</span>
<span class="t" style="left:1351.50px;top:1304.00px;font-size:26.65px;line-height:36px;color:#34383c;letter-spacing:-0.421px;">(tarayoung@mail.com)</span>
<span class="t" style="left:1668.25px;top:1267.00px;font-size:26.65px;line-height:36px;color:#34383c;letter-spacing:-0.250px;">31 Oct 2025</span>
<span class="t" style="left:1877.50px;top:1267.00px;font-size:26.65px;line-height:36px;color:#34383c;letter-spacing:-0.500px;">No</span>
<span id="t65" class="t" style="left:2074.50px;top:1267.00px;font-size:26.65px;line-height:36px;color:#34383c;letter-spacing:-0.400px;">10.00<span style="letter-spacing:-1.5px;word-spacing:-1.0px"> USD</span></span>
<span id="t66" class="t" style="left:2073.00px;top:1304.00px;font-size:26.65px;line-height:36px;color:#34383c;letter-spacing:-0.600px;">(Early Bird <b style="color:#000">X 1</b>)</span>
<span id="t67" class="t" style="left:2286.50px;top:1267.00px;font-size:26.65px;line-height:36px;color:#34383c;letter-spacing:-0.400px;">10.80<span style="letter-spacing:-1.5px;word-spacing:-1.0px"> USD</span></span>
<span class="t" style="left:2498.25px;top:1267.00px;font-size:26.65px;line-height:36px;color:#34383c;letter-spacing:-0.500px;">Gina White</span>
<span class="t" style="left:2497.25px;top:1304.00px;font-size:26.65px;line-height:36px;color:#34383c;letter-spacing:-0.500px;">(ginawhite@mail.com)</span>
<span id="t68" class="t" style="left:2817.75px;top:1267.00px;font-size:26.65px;line-height:36px;color:#34383c;letter-spacing:-0.400px;">9.98<span style="letter-spacing:-1.5px;word-spacing:-1.0px"> USD</span></span>
<span id="t69" class="t" style="left:3071.00px;top:1267.00px;font-size:26.65px;line-height:36px;color:#34383c;letter-spacing:-0.400px;">0.53<span style="letter-spacing:-1.5px;word-spacing:-1.0px"> USD</span></span>
<span id="t70" class="t" style="left:3341.50px;top:1267.00px;font-size:26.65px;line-height:36px;color:#34383c;letter-spacing:-0.400px;">0.30<span style="letter-spacing:-1.5px;word-spacing:-1.0px"> USD</span></span>
<span class="t" style="left:3526.50px;top:1267.00px;font-size:26.65px;line-height:36px;color:#34383c;letter-spacing:0.000px;">Pending</span>
<div class="row" style="top:1414.9px;height:161.39999999999986px"></div>
<span class="t" style="left:622.00px;top:1436.00px;font-size:22.55px;line-height:29px;color:#0a0a0a;font-weight:bold;letter-spacing:0.100px;">1604140562483</span>
<span class="t" style="left:860.00px;top:1436.00px;font-size:22.55px;line-height:29px;color:#0a0a0a;font-weight:bold;letter-spacing:0.020px;">VR assistant Workshop</span>
<span class="t" style="left:1166.00px;top:1432.00px;font-size:26.65px;line-height:36px;color:#34383c;letter-spacing:0.000px;">2025-11-09</span>
<span class="t" style="left:1167.50px;top:1469.00px;font-size:26.65px;line-height:36px;color:#34383c;letter-spacing:-0.198px;">-</span>
<span class="t" style="left:1166.00px;top:1506.00px;font-size:26.65px;line-height:36px;color:#34383c;letter-spacing:0.000px;">2025-11-09</span>
<span class="t" style="left:1352.50px;top:1432.00px;font-size:26.65px;line-height:36px;color:#34383c;letter-spacing:-0.222px;">Tara Young</span>
<span class="t" style="left:1351.50px;top:1469.00px;font-size:26.65px;line-height:36px;color:#34383c;letter-spacing:-0.421px;">(tarayoung@mail.com)</span>
<span class="t" style="left:1668.25px;top:1432.00px;font-size:26.65px;line-height:36px;color:#34383c;letter-spacing:-0.250px;">31 Oct 2025</span>
<span class="t" style="left:1877.50px;top:1432.00px;font-size:26.65px;line-height:36px;color:#34383c;letter-spacing:-0.500px;">No</span>
<span id="t71" class="t" style="left:2074.00px;top:1432.00px;font-size:26.65px;line-height:36px;color:#34383c;letter-spacing:-0.400px;">0.00<span style="letter-spacing:-1.5px;word-spacing:-1.0px"> USD</span></span>
<span id="t72" class="t" style="left:2073.00px;top:1469.00px;font-size:26.65px;line-height:36px;color:#34383c;letter-spacing:-0.689px;">(Free <b style="color:#000">X 4</b>)</span>
<span id="t73" class="t" style="left:2286.00px;top:1432.00px;font-size:26.65px;line-height:36px;color:#34383c;letter-spacing:-0.400px;">0.00<span style="letter-spacing:-1.5px;word-spacing:-1.0px"> USD</span></span>
<span class="t" style="left:2498.25px;top:1432.00px;font-size:26.65px;line-height:36px;color:#34383c;letter-spacing:-0.500px;">Gina White</span>
<span class="t" style="left:2497.25px;top:1469.00px;font-size:26.65px;line-height:36px;color:#34383c;letter-spacing:-0.500px;">(ginawhite@mail.com)</span>
<span id="t74" class="t" style="left:2817.75px;top:1432.00px;font-size:26.65px;line-height:36px;color:#34383c;letter-spacing:-0.400px;">0<span style="letter-spacing:-1.5px;word-spacing:-1.0px"> USD</span></span>
<span id="t75" class="t" style="left:3071.00px;top:1432.00px;font-size:26.65px;line-height:36px;color:#34383c;letter-spacing:-0.400px;">0<span style="letter-spacing:-1.5px;word-spacing:-1.0px"> USD</span></span>
<span id="t76" class="t" style="left:3341.50px;top:1432.00px;font-size:26.65px;line-height:36px;color:#34383c;letter-spacing:-0.400px;">0<span style="letter-spacing:-1.5px;word-spacing:-1.0px"> USD</span></span>
<span id="t77" class="t" style="left:3528.00px;top:1432.00px;font-size:26.65px;line-height:36px;color:#34383c;letter-spacing:0.100px;">Transferred</span>
<div class="row odd" style="top:1580.3px;height:119.70000000000005px"></div>
<span class="t" style="left:622.00px;top:1602.00px;font-size:22.55px;line-height:29px;color:#0a0a0a;font-weight:bold;letter-spacing:0.100px;">1604140562483</span>
<span class="t" style="left:860.00px;top:1602.00px;font-size:22.55px;line-height:29px;color:#0a0a0a;font-weight:bold;letter-spacing:0.020px;">VR assistant Workshop</span>
<span class="t" style="left:1166.00px;top:1598.00px;font-size:26.65px;line-height:36px;color:#34383c;letter-spacing:0.000px;">2025-11-09</span>
<span class="t" style="left:1167.50px;top:1635.00px;font-size:26.65px;line-height:36px;color:#34383c;letter-spacing:-0.198px;">-</span>
<span class="t" style="left:1166.00px;top:1672.00px;font-size:26.65px;line-height:36px;color:#34383c;letter-spacing:0.000px;">2025-11-09</span>
<span class="t" style="left:1352.50px;top:1598.00px;font-size:26.65px;line-height:36px;color:#34383c;letter-spacing:-0.222px;">Tara Young</span>
<span class="t" style="left:1351.50px;top:1635.00px;font-size:26.65px;line-height:36px;color:#34383c;letter-spacing:-0.421px;">(tarayoung@mail.com)</span>
<span class="t" style="left:1668.25px;top:1598.00px;font-size:26.65px;line-height:36px;color:#34383c;letter-spacing:-0.250px;">31 Oct 2025</span>
<span class="t" style="left:1877.50px;top:1598.00px;font-size:26.65px;line-height:36px;color:#34383c;letter-spacing:-0.500px;">No</span>
<span class="t" style="left:2074.00px;top:1598.00px;font-size:26.65px;line-height:36px;color:#34383c;letter-spacing:-0.400px;">0.00<span style="letter-spacing:-1.5px;word-spacing:-1.0px"> USD</span></span>
<span id="t78" class="t" style="left:2075.00px;top:1635.00px;font-size:26.65px;line-height:36px;color:#34383c;letter-spacing:-0.797px;">(Free <b style="color:#000">X 1</b>)</span>
<span class="t" style="left:2286.00px;top:1598.00px;font-size:26.65px;line-height:36px;color:#34383c;letter-spacing:-0.400px;">0.00<span style="letter-spacing:-1.5px;word-spacing:-1.0px"> USD</span></span>
<span class="t" style="left:2498.25px;top:1598.00px;font-size:26.65px;line-height:36px;color:#34383c;letter-spacing:-0.500px;">Gina White</span>
<span class="t" style="left:2497.25px;top:1635.00px;font-size:26.65px;line-height:36px;color:#34383c;letter-spacing:-0.500px;">(ginawhite@mail.com)</span>
<span class="t" style="left:2817.75px;top:1598.00px;font-size:26.65px;line-height:36px;color:#34383c;letter-spacing:-0.400px;">0<span style="letter-spacing:-1.5px;word-spacing:-1.0px"> USD</span></span>
<span class="t" style="left:3071.00px;top:1598.00px;font-size:26.65px;line-height:36px;color:#34383c;letter-spacing:-0.400px;">0<span style="letter-spacing:-1.5px;word-spacing:-1.0px"> USD</span></span>
<span class="t" style="left:3341.50px;top:1598.00px;font-size:26.65px;line-height:36px;color:#34383c;letter-spacing:-0.400px;">0<span style="letter-spacing:-1.5px;word-spacing:-1.0px"> USD</span></span>
<span class="t" style="left:3528.00px;top:1598.00px;font-size:26.65px;line-height:36px;color:#34383c;letter-spacing:0.100px;">Transferred</span>
<div class="abs" style="left:1545px;top:1628px;width:770px;height:80px;border-radius:20px;box-shadow:0 0 75px 25px rgba(0,0,0,.2)"></div>
<div class="abs" style="left:0;top:1595px;width:1.5px;height:4px;background:#d9d9d9"></div>
<div class="abs" style="left:3810px;top:0;width:26px;height:1599px;background:#fafafa;border-left:2px solid #e8e8e8"></div>
<div class="abs" style="left:3818px;top:114.8px;width:16px;height:337.2px;border-radius:8px;background:#c1c1c1"></div>
</div></body></html>
